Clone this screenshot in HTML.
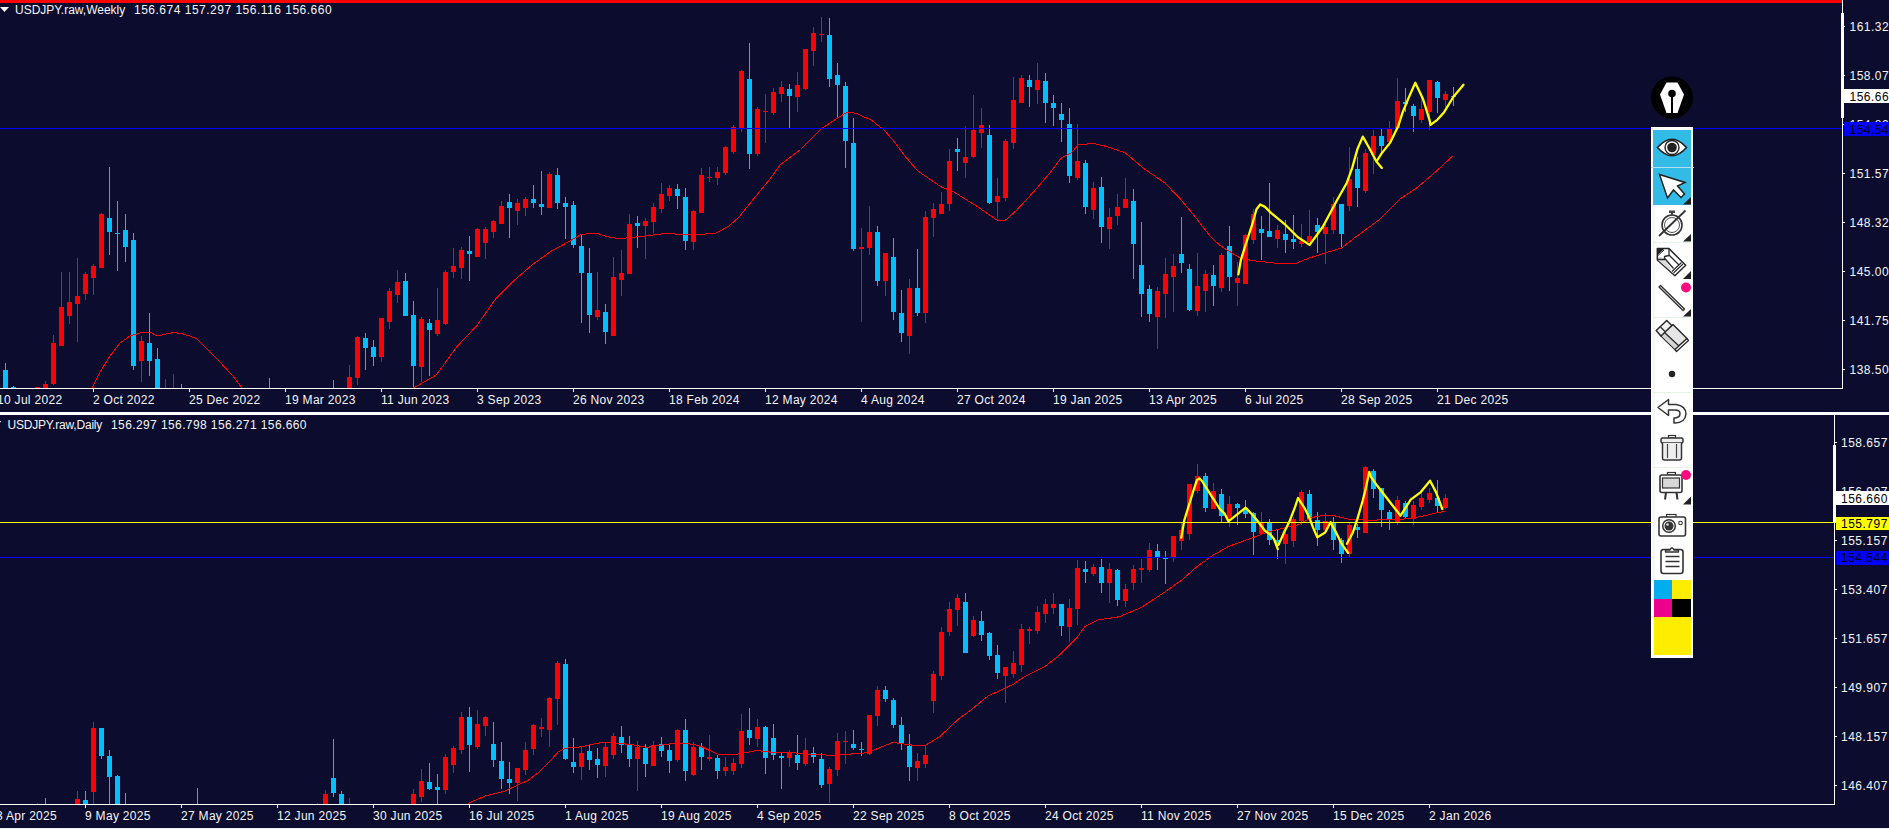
<!DOCTYPE html>
<html><head><meta charset="utf-8"><style>
html,body{margin:0;padding:0;width:1889px;height:829px;overflow:hidden;background:#0c0c2e;}
svg text{font-family:"Liberation Sans",sans-serif;}
</style></head><body>
<svg width="1889" height="829" viewBox="0 0 1889 829" style="position:absolute;left:0;top:0">
<defs><clipPath id="ct"><rect x="0" y="3" width="1842" height="385"/></clipPath><clipPath id="cb"><rect x="0" y="415" width="1834" height="389"/></clipPath></defs>
<rect x="0" y="0" width="1889" height="829" fill="#0c0c2e"/>
<g clip-path="url(#ct)" shape-rendering="crispEdges">
<rect x="5" y="363" width="1" height="25" fill="#00bfff"/>
<rect x="3" y="370" width="5" height="18" fill="#00bfff"/>
<rect x="13" y="386" width="1" height="2" fill="#00bfff"/>
<rect x="11" y="387" width="5" height="1" fill="#00bfff"/>
<rect x="37" y="387" width="1" height="1" fill="#ff0000"/>
<rect x="35" y="387" width="5" height="1" fill="#ff0000"/>
<rect x="45" y="381" width="1" height="7" fill="#ff0000"/>
<rect x="43" y="384" width="5" height="4" fill="#ff0000"/>
<rect x="53" y="335" width="1" height="50" fill="#ff0000"/>
<rect x="51" y="343" width="5" height="41" fill="#ff0000"/>
<rect x="61" y="272" width="1" height="74" fill="#ff0000"/>
<rect x="59" y="307" width="5" height="39" fill="#ff0000"/>
<rect x="69" y="272" width="1" height="52" fill="#ff0000"/>
<rect x="67" y="302" width="5" height="14" fill="#ff0000"/>
<rect x="77" y="258" width="1" height="84" fill="#ff0000"/>
<rect x="75" y="296" width="5" height="8" fill="#ff0000"/>
<rect x="85" y="272" width="1" height="28" fill="#ff0000"/>
<rect x="83" y="274" width="5" height="20" fill="#ff0000"/>
<rect x="93" y="264" width="1" height="31" fill="#ff0000"/>
<rect x="91" y="266" width="5" height="12" fill="#ff0000"/>
<rect x="101" y="213" width="1" height="55" fill="#ff0000"/>
<rect x="99" y="214" width="5" height="54" fill="#ff0000"/>
<rect x="109" y="167" width="1" height="88" fill="#00bfff"/>
<rect x="107" y="218" width="5" height="14" fill="#00bfff"/>
<rect x="117" y="201" width="1" height="70" fill="#00bfff"/>
<rect x="115" y="233" width="5" height="1" fill="#00bfff"/>
<rect x="125" y="214" width="1" height="48" fill="#00bfff"/>
<rect x="123" y="230" width="5" height="17" fill="#00bfff"/>
<rect x="133" y="233" width="1" height="137" fill="#00bfff"/>
<rect x="131" y="240" width="5" height="126" fill="#00bfff"/>
<rect x="141" y="336" width="1" height="46" fill="#ff0000"/>
<rect x="139" y="341" width="5" height="20" fill="#ff0000"/>
<rect x="149" y="313" width="1" height="63" fill="#00bfff"/>
<rect x="147" y="343" width="5" height="18" fill="#00bfff"/>
<rect x="157" y="348" width="1" height="40" fill="#00bfff"/>
<rect x="155" y="359" width="5" height="29" fill="#00bfff"/>
<rect x="165" y="379" width="1" height="9" fill="#ff0000"/>
<rect x="173" y="374" width="1" height="14" fill="#ff0000"/>
<rect x="181" y="384" width="1" height="4" fill="#00bfff"/>
<rect x="269" y="378" width="1" height="10" fill="#00bfff"/>
<rect x="333" y="380" width="1" height="8" fill="#00bfff"/>
<rect x="349" y="365" width="1" height="23" fill="#ff0000"/>
<rect x="347" y="377" width="5" height="11" fill="#ff0000"/>
<rect x="357" y="336" width="1" height="49" fill="#ff0000"/>
<rect x="355" y="337" width="5" height="41" fill="#ff0000"/>
<rect x="365" y="333" width="1" height="37" fill="#00bfff"/>
<rect x="363" y="338" width="5" height="10" fill="#00bfff"/>
<rect x="373" y="340" width="1" height="26" fill="#00bfff"/>
<rect x="371" y="347" width="5" height="10" fill="#00bfff"/>
<rect x="381" y="318" width="1" height="44" fill="#ff0000"/>
<rect x="379" y="318" width="5" height="39" fill="#ff0000"/>
<rect x="389" y="288" width="1" height="41" fill="#ff0000"/>
<rect x="387" y="291" width="5" height="31" fill="#ff0000"/>
<rect x="397" y="270" width="1" height="33" fill="#ff0000"/>
<rect x="395" y="282" width="5" height="13" fill="#ff0000"/>
<rect x="405" y="273" width="1" height="43" fill="#00bfff"/>
<rect x="403" y="281" width="5" height="35" fill="#00bfff"/>
<rect x="413" y="301" width="1" height="87" fill="#00bfff"/>
<rect x="411" y="315" width="5" height="51" fill="#00bfff"/>
<rect x="421" y="317" width="1" height="65" fill="#ff0000"/>
<rect x="419" y="319" width="5" height="48" fill="#ff0000"/>
<rect x="429" y="319" width="1" height="57" fill="#00bfff"/>
<rect x="427" y="323" width="5" height="7" fill="#00bfff"/>
<rect x="437" y="288" width="1" height="48" fill="#ff0000"/>
<rect x="435" y="320" width="5" height="14" fill="#ff0000"/>
<rect x="445" y="270" width="1" height="55" fill="#ff0000"/>
<rect x="443" y="272" width="5" height="52" fill="#ff0000"/>
<rect x="453" y="248" width="1" height="30" fill="#ff0000"/>
<rect x="451" y="266" width="5" height="6" fill="#ff0000"/>
<rect x="461" y="247" width="1" height="32" fill="#ff0000"/>
<rect x="459" y="250" width="5" height="18" fill="#ff0000"/>
<rect x="469" y="236" width="1" height="45" fill="#00bfff"/>
<rect x="467" y="251" width="5" height="3" fill="#00bfff"/>
<rect x="477" y="228" width="1" height="29" fill="#ff0000"/>
<rect x="475" y="229" width="5" height="28" fill="#ff0000"/>
<rect x="485" y="227" width="1" height="32" fill="#ff0000"/>
<rect x="483" y="229" width="5" height="14" fill="#ff0000"/>
<rect x="493" y="220" width="1" height="18" fill="#ff0000"/>
<rect x="491" y="221" width="5" height="11" fill="#ff0000"/>
<rect x="501" y="201" width="1" height="23" fill="#ff0000"/>
<rect x="499" y="206" width="5" height="18" fill="#ff0000"/>
<rect x="509" y="194" width="1" height="44" fill="#00bfff"/>
<rect x="507" y="202" width="5" height="6" fill="#00bfff"/>
<rect x="517" y="199" width="1" height="26" fill="#ff0000"/>
<rect x="515" y="203" width="5" height="8" fill="#ff0000"/>
<rect x="525" y="197" width="1" height="19" fill="#ff0000"/>
<rect x="523" y="199" width="5" height="9" fill="#ff0000"/>
<rect x="533" y="185" width="1" height="23" fill="#00bfff"/>
<rect x="531" y="199" width="5" height="4" fill="#00bfff"/>
<rect x="541" y="171" width="1" height="44" fill="#00bfff"/>
<rect x="539" y="204" width="5" height="3" fill="#00bfff"/>
<rect x="549" y="172" width="1" height="36" fill="#ff0000"/>
<rect x="547" y="174" width="5" height="34" fill="#ff0000"/>
<rect x="557" y="168" width="1" height="41" fill="#00bfff"/>
<rect x="555" y="175" width="5" height="28" fill="#00bfff"/>
<rect x="565" y="197" width="1" height="42" fill="#00bfff"/>
<rect x="563" y="203" width="5" height="4" fill="#00bfff"/>
<rect x="573" y="201" width="1" height="47" fill="#00bfff"/>
<rect x="571" y="205" width="5" height="40" fill="#00bfff"/>
<rect x="581" y="235" width="1" height="88" fill="#00bfff"/>
<rect x="579" y="246" width="5" height="27" fill="#00bfff"/>
<rect x="589" y="248" width="1" height="85" fill="#00bfff"/>
<rect x="587" y="273" width="5" height="42" fill="#00bfff"/>
<rect x="597" y="272" width="1" height="48" fill="#ff0000"/>
<rect x="595" y="310" width="5" height="7" fill="#ff0000"/>
<rect x="605" y="304" width="1" height="40" fill="#00bfff"/>
<rect x="603" y="312" width="5" height="20" fill="#00bfff"/>
<rect x="613" y="257" width="1" height="79" fill="#ff0000"/>
<rect x="611" y="277" width="5" height="59" fill="#ff0000"/>
<rect x="621" y="250" width="1" height="46" fill="#ff0000"/>
<rect x="619" y="273" width="5" height="7" fill="#ff0000"/>
<rect x="629" y="214" width="1" height="60" fill="#ff0000"/>
<rect x="627" y="224" width="5" height="50" fill="#ff0000"/>
<rect x="637" y="216" width="1" height="32" fill="#00bfff"/>
<rect x="635" y="223" width="5" height="3" fill="#00bfff"/>
<rect x="645" y="218" width="1" height="41" fill="#ff0000"/>
<rect x="643" y="221" width="5" height="5" fill="#ff0000"/>
<rect x="653" y="203" width="1" height="30" fill="#ff0000"/>
<rect x="651" y="207" width="5" height="15" fill="#ff0000"/>
<rect x="661" y="183" width="1" height="30" fill="#ff0000"/>
<rect x="659" y="194" width="5" height="15" fill="#ff0000"/>
<rect x="669" y="185" width="1" height="16" fill="#ff0000"/>
<rect x="667" y="188" width="5" height="8" fill="#ff0000"/>
<rect x="677" y="184" width="1" height="25" fill="#00bfff"/>
<rect x="675" y="189" width="5" height="7" fill="#00bfff"/>
<rect x="685" y="188" width="1" height="62" fill="#00bfff"/>
<rect x="683" y="197" width="5" height="44" fill="#00bfff"/>
<rect x="693" y="210" width="1" height="40" fill="#ff0000"/>
<rect x="691" y="211" width="5" height="31" fill="#ff0000"/>
<rect x="701" y="168" width="1" height="45" fill="#ff0000"/>
<rect x="699" y="175" width="5" height="38" fill="#ff0000"/>
<rect x="709" y="167" width="1" height="15" fill="#ff0000"/>
<rect x="707" y="177" width="5" height="1" fill="#ff0000"/>
<rect x="717" y="167" width="1" height="18" fill="#ff0000"/>
<rect x="715" y="172" width="5" height="6" fill="#ff0000"/>
<rect x="725" y="146" width="1" height="29" fill="#ff0000"/>
<rect x="723" y="147" width="5" height="26" fill="#ff0000"/>
<rect x="733" y="125" width="1" height="29" fill="#ff0000"/>
<rect x="731" y="127" width="5" height="25" fill="#ff0000"/>
<rect x="741" y="70" width="1" height="62" fill="#ff0000"/>
<rect x="739" y="71" width="5" height="57" fill="#ff0000"/>
<rect x="749" y="43" width="1" height="126" fill="#00bfff"/>
<rect x="747" y="79" width="5" height="75" fill="#00bfff"/>
<rect x="757" y="107" width="1" height="49" fill="#ff0000"/>
<rect x="755" y="109" width="5" height="45" fill="#ff0000"/>
<rect x="765" y="94" width="1" height="49" fill="#ff0000"/>
<rect x="763" y="111" width="5" height="1" fill="#ff0000"/>
<rect x="773" y="88" width="1" height="27" fill="#ff0000"/>
<rect x="771" y="92" width="5" height="21" fill="#ff0000"/>
<rect x="781" y="81" width="1" height="21" fill="#ff0000"/>
<rect x="779" y="87" width="5" height="7" fill="#ff0000"/>
<rect x="789" y="84" width="1" height="44" fill="#00bfff"/>
<rect x="787" y="89" width="5" height="7" fill="#00bfff"/>
<rect x="797" y="72" width="1" height="40" fill="#ff0000"/>
<rect x="795" y="85" width="5" height="12" fill="#ff0000"/>
<rect x="805" y="49" width="1" height="41" fill="#ff0000"/>
<rect x="803" y="49" width="5" height="40" fill="#ff0000"/>
<rect x="813" y="27" width="1" height="39" fill="#ff0000"/>
<rect x="811" y="33" width="5" height="18" fill="#ff0000"/>
<rect x="821" y="17" width="1" height="25" fill="#ff0000"/>
<rect x="819" y="34" width="5" height="1" fill="#ff0000"/>
<rect x="829" y="18" width="1" height="69" fill="#00bfff"/>
<rect x="827" y="35" width="5" height="44" fill="#00bfff"/>
<rect x="837" y="63" width="1" height="54" fill="#00bfff"/>
<rect x="835" y="75" width="5" height="10" fill="#00bfff"/>
<rect x="845" y="82" width="1" height="86" fill="#00bfff"/>
<rect x="843" y="86" width="5" height="55" fill="#00bfff"/>
<rect x="853" y="118" width="1" height="133" fill="#00bfff"/>
<rect x="851" y="143" width="5" height="106" fill="#00bfff"/>
<rect x="861" y="228" width="1" height="94" fill="#ff0000"/>
<rect x="859" y="247" width="5" height="2" fill="#ff0000"/>
<rect x="869" y="206" width="1" height="49" fill="#ff0000"/>
<rect x="867" y="232" width="5" height="16" fill="#ff0000"/>
<rect x="877" y="226" width="1" height="60" fill="#00bfff"/>
<rect x="875" y="232" width="5" height="49" fill="#00bfff"/>
<rect x="885" y="253" width="1" height="43" fill="#ff0000"/>
<rect x="883" y="253" width="5" height="28" fill="#ff0000"/>
<rect x="893" y="238" width="1" height="82" fill="#00bfff"/>
<rect x="891" y="257" width="5" height="55" fill="#00bfff"/>
<rect x="901" y="290" width="1" height="52" fill="#00bfff"/>
<rect x="899" y="313" width="5" height="20" fill="#00bfff"/>
<rect x="909" y="279" width="1" height="75" fill="#ff0000"/>
<rect x="907" y="288" width="5" height="48" fill="#ff0000"/>
<rect x="917" y="249" width="1" height="67" fill="#00bfff"/>
<rect x="915" y="288" width="5" height="25" fill="#00bfff"/>
<rect x="925" y="211" width="1" height="112" fill="#ff0000"/>
<rect x="923" y="217" width="5" height="96" fill="#ff0000"/>
<rect x="933" y="203" width="1" height="34" fill="#ff0000"/>
<rect x="931" y="209" width="5" height="9" fill="#ff0000"/>
<rect x="941" y="192" width="1" height="22" fill="#ff0000"/>
<rect x="939" y="204" width="5" height="10" fill="#ff0000"/>
<rect x="949" y="149" width="1" height="62" fill="#ff0000"/>
<rect x="947" y="161" width="5" height="43" fill="#ff0000"/>
<rect x="957" y="138" width="1" height="33" fill="#00bfff"/>
<rect x="955" y="149" width="5" height="3" fill="#00bfff"/>
<rect x="965" y="126" width="1" height="52" fill="#ff0000"/>
<rect x="963" y="157" width="5" height="6" fill="#ff0000"/>
<rect x="973" y="95" width="1" height="63" fill="#ff0000"/>
<rect x="971" y="130" width="5" height="27" fill="#ff0000"/>
<rect x="981" y="108" width="1" height="40" fill="#ff0000"/>
<rect x="979" y="125" width="5" height="8" fill="#ff0000"/>
<rect x="989" y="125" width="1" height="79" fill="#00bfff"/>
<rect x="987" y="135" width="5" height="68" fill="#00bfff"/>
<rect x="997" y="178" width="1" height="40" fill="#ff0000"/>
<rect x="995" y="196" width="5" height="6" fill="#ff0000"/>
<rect x="1005" y="139" width="1" height="62" fill="#ff0000"/>
<rect x="1003" y="141" width="5" height="57" fill="#ff0000"/>
<rect x="1013" y="77" width="1" height="72" fill="#ff0000"/>
<rect x="1011" y="100" width="5" height="43" fill="#ff0000"/>
<rect x="1021" y="75" width="1" height="28" fill="#ff0000"/>
<rect x="1019" y="78" width="5" height="25" fill="#ff0000"/>
<rect x="1029" y="75" width="1" height="32" fill="#00bfff"/>
<rect x="1027" y="80" width="5" height="7" fill="#00bfff"/>
<rect x="1037" y="63" width="1" height="41" fill="#ff0000"/>
<rect x="1035" y="80" width="5" height="10" fill="#ff0000"/>
<rect x="1045" y="73" width="1" height="50" fill="#00bfff"/>
<rect x="1043" y="81" width="5" height="22" fill="#00bfff"/>
<rect x="1053" y="95" width="1" height="31" fill="#00bfff"/>
<rect x="1051" y="103" width="5" height="5" fill="#00bfff"/>
<rect x="1061" y="103" width="1" height="39" fill="#00bfff"/>
<rect x="1059" y="114" width="5" height="6" fill="#00bfff"/>
<rect x="1069" y="108" width="1" height="75" fill="#00bfff"/>
<rect x="1067" y="124" width="5" height="52" fill="#00bfff"/>
<rect x="1077" y="124" width="1" height="56" fill="#ff0000"/>
<rect x="1075" y="161" width="5" height="17" fill="#ff0000"/>
<rect x="1085" y="160" width="1" height="54" fill="#00bfff"/>
<rect x="1083" y="163" width="5" height="44" fill="#00bfff"/>
<rect x="1093" y="182" width="1" height="37" fill="#ff0000"/>
<rect x="1091" y="188" width="5" height="22" fill="#ff0000"/>
<rect x="1101" y="177" width="1" height="66" fill="#00bfff"/>
<rect x="1099" y="187" width="5" height="40" fill="#00bfff"/>
<rect x="1109" y="208" width="1" height="41" fill="#ff0000"/>
<rect x="1107" y="217" width="5" height="12" fill="#ff0000"/>
<rect x="1117" y="194" width="1" height="31" fill="#ff0000"/>
<rect x="1115" y="207" width="5" height="9" fill="#ff0000"/>
<rect x="1125" y="178" width="1" height="30" fill="#ff0000"/>
<rect x="1123" y="199" width="5" height="9" fill="#ff0000"/>
<rect x="1133" y="189" width="1" height="90" fill="#00bfff"/>
<rect x="1131" y="201" width="5" height="43" fill="#00bfff"/>
<rect x="1141" y="222" width="1" height="95" fill="#00bfff"/>
<rect x="1139" y="265" width="5" height="29" fill="#00bfff"/>
<rect x="1149" y="285" width="1" height="37" fill="#00bfff"/>
<rect x="1147" y="289" width="5" height="25" fill="#00bfff"/>
<rect x="1157" y="287" width="1" height="62" fill="#ff0000"/>
<rect x="1155" y="291" width="5" height="26" fill="#ff0000"/>
<rect x="1165" y="258" width="1" height="60" fill="#ff0000"/>
<rect x="1163" y="274" width="5" height="20" fill="#ff0000"/>
<rect x="1173" y="254" width="1" height="58" fill="#ff0000"/>
<rect x="1171" y="266" width="5" height="11" fill="#ff0000"/>
<rect x="1181" y="217" width="1" height="56" fill="#00bfff"/>
<rect x="1179" y="254" width="5" height="9" fill="#00bfff"/>
<rect x="1189" y="264" width="1" height="47" fill="#00bfff"/>
<rect x="1187" y="269" width="5" height="41" fill="#00bfff"/>
<rect x="1197" y="253" width="1" height="63" fill="#ff0000"/>
<rect x="1195" y="286" width="5" height="25" fill="#ff0000"/>
<rect x="1205" y="270" width="1" height="42" fill="#ff0000"/>
<rect x="1203" y="274" width="5" height="17" fill="#ff0000"/>
<rect x="1213" y="265" width="1" height="41" fill="#00bfff"/>
<rect x="1211" y="275" width="5" height="11" fill="#00bfff"/>
<rect x="1221" y="253" width="1" height="39" fill="#ff0000"/>
<rect x="1219" y="255" width="5" height="33" fill="#ff0000"/>
<rect x="1229" y="226" width="1" height="65" fill="#00bfff"/>
<rect x="1227" y="246" width="5" height="31" fill="#00bfff"/>
<rect x="1237" y="262" width="1" height="44" fill="#ff0000"/>
<rect x="1235" y="278" width="5" height="5" fill="#ff0000"/>
<rect x="1245" y="234" width="1" height="50" fill="#ff0000"/>
<rect x="1243" y="235" width="5" height="49" fill="#ff0000"/>
<rect x="1253" y="209" width="1" height="35" fill="#ff0000"/>
<rect x="1251" y="214" width="5" height="26" fill="#ff0000"/>
<rect x="1261" y="216" width="1" height="44" fill="#00bfff"/>
<rect x="1259" y="229" width="5" height="4" fill="#00bfff"/>
<rect x="1269" y="183" width="1" height="54" fill="#00bfff"/>
<rect x="1267" y="231" width="5" height="6" fill="#00bfff"/>
<rect x="1277" y="225" width="1" height="23" fill="#ff0000"/>
<rect x="1275" y="230" width="5" height="9" fill="#ff0000"/>
<rect x="1285" y="220" width="1" height="33" fill="#00bfff"/>
<rect x="1283" y="234" width="5" height="6" fill="#00bfff"/>
<rect x="1293" y="215" width="1" height="34" fill="#00bfff"/>
<rect x="1291" y="239" width="5" height="3" fill="#00bfff"/>
<rect x="1301" y="224" width="1" height="23" fill="#ff0000"/>
<rect x="1299" y="241" width="5" height="3" fill="#ff0000"/>
<rect x="1309" y="210" width="1" height="32" fill="#ff0000"/>
<rect x="1307" y="236" width="5" height="6" fill="#ff0000"/>
<rect x="1317" y="218" width="1" height="35" fill="#00bfff"/>
<rect x="1315" y="225" width="5" height="7" fill="#00bfff"/>
<rect x="1325" y="224" width="1" height="40" fill="#ff0000"/>
<rect x="1323" y="227" width="5" height="7" fill="#ff0000"/>
<rect x="1333" y="197" width="1" height="37" fill="#ff0000"/>
<rect x="1331" y="204" width="5" height="26" fill="#ff0000"/>
<rect x="1341" y="204" width="1" height="44" fill="#00bfff"/>
<rect x="1339" y="204" width="5" height="30" fill="#00bfff"/>
<rect x="1349" y="147" width="1" height="64" fill="#ff0000"/>
<rect x="1347" y="179" width="5" height="27" fill="#ff0000"/>
<rect x="1357" y="157" width="1" height="50" fill="#00bfff"/>
<rect x="1355" y="169" width="5" height="19" fill="#00bfff"/>
<rect x="1365" y="149" width="1" height="44" fill="#ff0000"/>
<rect x="1363" y="153" width="5" height="38" fill="#ff0000"/>
<rect x="1373" y="130" width="1" height="44" fill="#ff0000"/>
<rect x="1371" y="136" width="5" height="19" fill="#ff0000"/>
<rect x="1381" y="128" width="1" height="26" fill="#00bfff"/>
<rect x="1379" y="136" width="5" height="10" fill="#00bfff"/>
<rect x="1389" y="121" width="1" height="25" fill="#ff0000"/>
<rect x="1387" y="129" width="5" height="13" fill="#ff0000"/>
<rect x="1397" y="78" width="1" height="50" fill="#ff0000"/>
<rect x="1395" y="101" width="5" height="27" fill="#ff0000"/>
<rect x="1405" y="88" width="1" height="24" fill="#00bfff"/>
<rect x="1403" y="102" width="5" height="2" fill="#00bfff"/>
<rect x="1413" y="104" width="1" height="28" fill="#00bfff"/>
<rect x="1411" y="106" width="5" height="10" fill="#00bfff"/>
<rect x="1421" y="93" width="1" height="30" fill="#ff0000"/>
<rect x="1419" y="109" width="5" height="11" fill="#ff0000"/>
<rect x="1429" y="80" width="1" height="50" fill="#ff0000"/>
<rect x="1427" y="80" width="5" height="32" fill="#ff0000"/>
<rect x="1437" y="81" width="1" height="32" fill="#00bfff"/>
<rect x="1435" y="82" width="5" height="16" fill="#00bfff"/>
<rect x="1445" y="91" width="1" height="16" fill="#ff0000"/>
<rect x="1443" y="94" width="5" height="6" fill="#ff0000"/>
<rect x="1453" y="87" width="1" height="19" fill="#00bfff"/>
<rect x="1451" y="96" width="5" height="1" fill="#00bfff"/>
<polyline points="92.0,388.0 100.0,372.0 110.0,356.0 120.0,343.0 130.0,336.0 140.0,333.0 150.0,332.0 157.0,336.0 165.0,334.3 173.0,332.5 181.0,333.5 190.0,336.0 197.0,339.0 210.0,352.0 218.0,360.0 225.0,367.5 233.0,376.0 242.0,388.0" fill="none" stroke="#ff0000" stroke-width="1" />
<polyline points="413.0,388.0 416.0,386.5 436.3,375.0 456.5,347.0 476.8,325.7 495.2,299.5 515.5,279.2 533.2,264.0 551.0,251.3 565.0,243.7 581.3,234.4 596.5,233.1 606.7,236.6 619.3,238.7 645.3,236.0 665.6,233.5 680.8,234.3 696.0,234.8 716.3,233.0 729.0,226.0 739.0,217.0 754.3,198.0 770.0,179.0 780.3,164.7 800.5,149.5 820.8,129.2 836.0,119.0 847.4,112.0 856.3,113.3 871.5,120.3 884.1,130.0 892.8,140.0 904.5,155.6 917.4,170.6 940.8,186.7 953.7,191.9 978.0,207.0 997.0,220.2 1005.4,220.2 1016.0,210.8 1033.7,191.8 1049.0,174.0 1061.6,157.6 1071.7,152.5 1078.0,145.0 1093.3,143.3 1106.5,146.5 1125.0,152.6 1143.7,168.5 1165.0,183.0 1180.8,199.5 1196.8,218.9 1210.0,236.2 1220.0,245.5 1240.3,258.2 1253.0,260.7 1283.3,264.0 1296.0,263.3 1308.7,258.2 1326.4,252.6 1341.6,248.0 1354.3,238.0 1370.0,226.5 1380.3,219.0 1400.5,198.8 1418.3,186.7 1436.0,171.5 1453.0,155.8" fill="none" stroke="#ff0000" stroke-width="1" />
<rect x="0" y="128" width="1842" height="1" fill="#0000ff"/>
</g>
<g clip-path="url(#ct)">
<polyline points="1238.4,274.4 1240.9,259.9 1245.7,244.3 1251.7,226.2 1256.5,209.3 1260.2,204.5 1265.0,206.9 1271.0,212.9 1284.3,223.8 1297.6,237.0 1309.6,244.9 1322.7,227.0 1337.4,199.5 1346.9,182.7 1352.2,167.9 1357.5,148.9 1362.8,136.6 1369.1,147.8 1376.5,161.6 1381.8,167.9" fill="none" stroke="#ffff00" stroke-width="2.3" stroke-linejoin="round" stroke-linecap="round"/>
<polyline points="1377.1,160.5 1381.8,153.1 1390.2,142.6 1398.4,125.7 1402.7,112.2 1408.6,97.9 1415.3,82.7 1422.9,98.7 1429.7,120.7 1430.5,124.9 1437.3,119.8 1444.1,112.2 1453.3,97.0 1463.5,84.8" fill="none" stroke="#ffff00" stroke-width="2.3" stroke-linejoin="round" stroke-linecap="round"/>
</g>
<rect x="0" y="0" width="1842" height="3" fill="#ff0000"/>
<g clip-path="url(#cb)" shape-rendering="crispEdges">
<rect x="37" y="803" width="1" height="1" fill="#ff0000"/>
<rect x="45" y="798" width="1" height="6" fill="#00bfff"/>
<rect x="77" y="791" width="1" height="13" fill="#ff0000"/>
<rect x="75" y="799" width="5" height="5" fill="#ff0000"/>
<rect x="85" y="791" width="1" height="13" fill="#00bfff"/>
<rect x="83" y="800" width="5" height="4" fill="#00bfff"/>
<rect x="93" y="722" width="1" height="82" fill="#ff0000"/>
<rect x="91" y="728" width="5" height="64" fill="#ff0000"/>
<rect x="101" y="728" width="1" height="31" fill="#00bfff"/>
<rect x="99" y="728" width="5" height="28" fill="#00bfff"/>
<rect x="109" y="750" width="1" height="54" fill="#00bfff"/>
<rect x="107" y="756" width="5" height="21" fill="#00bfff"/>
<rect x="117" y="775" width="1" height="29" fill="#00bfff"/>
<rect x="115" y="776" width="5" height="28" fill="#00bfff"/>
<rect x="125" y="793" width="1" height="11" fill="#00bfff"/>
<rect x="197" y="788" width="1" height="16" fill="#00bfff"/>
<rect x="317" y="803" width="1" height="1" fill="#ff0000"/>
<rect x="325" y="790" width="1" height="14" fill="#ff0000"/>
<rect x="323" y="794" width="5" height="10" fill="#ff0000"/>
<rect x="333" y="739" width="1" height="58" fill="#00bfff"/>
<rect x="331" y="778" width="5" height="15" fill="#00bfff"/>
<rect x="341" y="791" width="1" height="13" fill="#00bfff"/>
<rect x="339" y="794" width="5" height="10" fill="#00bfff"/>
<rect x="349" y="798" width="1" height="6" fill="#ff0000"/>
<rect x="413" y="789" width="1" height="15" fill="#ff0000"/>
<rect x="411" y="794" width="5" height="10" fill="#ff0000"/>
<rect x="421" y="769" width="1" height="33" fill="#ff0000"/>
<rect x="419" y="781" width="5" height="16" fill="#ff0000"/>
<rect x="429" y="763" width="1" height="27" fill="#00bfff"/>
<rect x="427" y="782" width="5" height="7" fill="#00bfff"/>
<rect x="437" y="774" width="1" height="30" fill="#00bfff"/>
<rect x="435" y="787" width="5" height="3" fill="#00bfff"/>
<rect x="445" y="754" width="1" height="40" fill="#ff0000"/>
<rect x="443" y="757" width="5" height="33" fill="#ff0000"/>
<rect x="453" y="746" width="1" height="27" fill="#ff0000"/>
<rect x="451" y="748" width="5" height="17" fill="#ff0000"/>
<rect x="461" y="712" width="1" height="42" fill="#ff0000"/>
<rect x="459" y="717" width="5" height="33" fill="#ff0000"/>
<rect x="469" y="707" width="1" height="65" fill="#00bfff"/>
<rect x="467" y="717" width="5" height="28" fill="#00bfff"/>
<rect x="477" y="710" width="1" height="39" fill="#ff0000"/>
<rect x="475" y="724" width="5" height="23" fill="#ff0000"/>
<rect x="485" y="716" width="1" height="20" fill="#ff0000"/>
<rect x="483" y="717" width="5" height="9" fill="#ff0000"/>
<rect x="493" y="722" width="1" height="45" fill="#00bfff"/>
<rect x="491" y="744" width="5" height="16" fill="#00bfff"/>
<rect x="501" y="742" width="1" height="47" fill="#00bfff"/>
<rect x="499" y="761" width="5" height="18" fill="#00bfff"/>
<rect x="509" y="762" width="1" height="32" fill="#00bfff"/>
<rect x="507" y="779" width="5" height="4" fill="#00bfff"/>
<rect x="517" y="768" width="1" height="33" fill="#ff0000"/>
<rect x="515" y="768" width="5" height="15" fill="#ff0000"/>
<rect x="525" y="742" width="1" height="33" fill="#ff0000"/>
<rect x="523" y="750" width="5" height="20" fill="#ff0000"/>
<rect x="533" y="724" width="1" height="31" fill="#ff0000"/>
<rect x="531" y="725" width="5" height="24" fill="#ff0000"/>
<rect x="541" y="718" width="1" height="19" fill="#ff0000"/>
<rect x="539" y="727" width="5" height="2" fill="#ff0000"/>
<rect x="549" y="697" width="1" height="50" fill="#ff0000"/>
<rect x="547" y="698" width="5" height="32" fill="#ff0000"/>
<rect x="557" y="661" width="1" height="64" fill="#ff0000"/>
<rect x="555" y="663" width="5" height="36" fill="#ff0000"/>
<rect x="565" y="659" width="1" height="101" fill="#00bfff"/>
<rect x="563" y="664" width="5" height="95" fill="#00bfff"/>
<rect x="573" y="738" width="1" height="35" fill="#00bfff"/>
<rect x="571" y="762" width="5" height="5" fill="#00bfff"/>
<rect x="581" y="746" width="1" height="34" fill="#ff0000"/>
<rect x="579" y="753" width="5" height="14" fill="#ff0000"/>
<rect x="589" y="745" width="1" height="25" fill="#00bfff"/>
<rect x="587" y="751" width="5" height="9" fill="#00bfff"/>
<rect x="597" y="748" width="1" height="30" fill="#00bfff"/>
<rect x="595" y="759" width="5" height="6" fill="#00bfff"/>
<rect x="605" y="743" width="1" height="34" fill="#ff0000"/>
<rect x="603" y="747" width="5" height="19" fill="#ff0000"/>
<rect x="613" y="733" width="1" height="26" fill="#ff0000"/>
<rect x="611" y="736" width="5" height="19" fill="#ff0000"/>
<rect x="621" y="726" width="1" height="27" fill="#00bfff"/>
<rect x="619" y="737" width="5" height="8" fill="#00bfff"/>
<rect x="629" y="736" width="1" height="31" fill="#00bfff"/>
<rect x="627" y="745" width="5" height="14" fill="#00bfff"/>
<rect x="637" y="741" width="1" height="50" fill="#ff0000"/>
<rect x="635" y="747" width="5" height="12" fill="#ff0000"/>
<rect x="645" y="744" width="1" height="33" fill="#00bfff"/>
<rect x="643" y="748" width="5" height="16" fill="#00bfff"/>
<rect x="653" y="741" width="1" height="25" fill="#ff0000"/>
<rect x="651" y="745" width="5" height="21" fill="#ff0000"/>
<rect x="661" y="737" width="1" height="20" fill="#00bfff"/>
<rect x="659" y="744" width="5" height="7" fill="#00bfff"/>
<rect x="669" y="745" width="1" height="28" fill="#00bfff"/>
<rect x="667" y="750" width="5" height="11" fill="#00bfff"/>
<rect x="677" y="729" width="1" height="33" fill="#ff0000"/>
<rect x="675" y="730" width="5" height="30" fill="#ff0000"/>
<rect x="685" y="719" width="1" height="62" fill="#00bfff"/>
<rect x="683" y="730" width="5" height="41" fill="#00bfff"/>
<rect x="693" y="742" width="1" height="34" fill="#ff0000"/>
<rect x="691" y="747" width="5" height="28" fill="#ff0000"/>
<rect x="701" y="743" width="1" height="27" fill="#00bfff"/>
<rect x="699" y="747" width="5" height="10" fill="#00bfff"/>
<rect x="709" y="735" width="1" height="26" fill="#ff0000"/>
<rect x="707" y="757" width="5" height="2" fill="#ff0000"/>
<rect x="717" y="755" width="1" height="24" fill="#00bfff"/>
<rect x="715" y="758" width="5" height="13" fill="#00bfff"/>
<rect x="725" y="757" width="1" height="19" fill="#ff0000"/>
<rect x="723" y="767" width="5" height="4" fill="#ff0000"/>
<rect x="733" y="758" width="1" height="17" fill="#ff0000"/>
<rect x="731" y="763" width="5" height="8" fill="#ff0000"/>
<rect x="741" y="714" width="1" height="54" fill="#ff0000"/>
<rect x="739" y="731" width="5" height="33" fill="#ff0000"/>
<rect x="749" y="708" width="1" height="37" fill="#00bfff"/>
<rect x="747" y="730" width="5" height="8" fill="#00bfff"/>
<rect x="757" y="719" width="1" height="28" fill="#ff0000"/>
<rect x="755" y="727" width="5" height="12" fill="#ff0000"/>
<rect x="765" y="726" width="1" height="48" fill="#00bfff"/>
<rect x="763" y="727" width="5" height="31" fill="#00bfff"/>
<rect x="773" y="724" width="1" height="36" fill="#00bfff"/>
<rect x="771" y="738" width="5" height="17" fill="#00bfff"/>
<rect x="781" y="753" width="1" height="36" fill="#00bfff"/>
<rect x="779" y="756" width="5" height="2" fill="#00bfff"/>
<rect x="789" y="750" width="1" height="17" fill="#ff0000"/>
<rect x="787" y="752" width="5" height="6" fill="#ff0000"/>
<rect x="797" y="735" width="1" height="35" fill="#00bfff"/>
<rect x="795" y="755" width="5" height="8" fill="#00bfff"/>
<rect x="805" y="738" width="1" height="28" fill="#ff0000"/>
<rect x="803" y="750" width="5" height="14" fill="#ff0000"/>
<rect x="813" y="747" width="1" height="16" fill="#00bfff"/>
<rect x="811" y="753" width="5" height="4" fill="#00bfff"/>
<rect x="821" y="753" width="1" height="35" fill="#00bfff"/>
<rect x="819" y="759" width="5" height="26" fill="#00bfff"/>
<rect x="829" y="767" width="1" height="36" fill="#ff0000"/>
<rect x="827" y="769" width="5" height="15" fill="#ff0000"/>
<rect x="837" y="733" width="1" height="43" fill="#ff0000"/>
<rect x="835" y="741" width="5" height="29" fill="#ff0000"/>
<rect x="845" y="731" width="1" height="33" fill="#ff0000"/>
<rect x="843" y="741" width="5" height="1" fill="#ff0000"/>
<rect x="853" y="730" width="1" height="20" fill="#00bfff"/>
<rect x="851" y="744" width="5" height="4" fill="#00bfff"/>
<rect x="861" y="742" width="1" height="14" fill="#00bfff"/>
<rect x="859" y="749" width="5" height="1" fill="#00bfff"/>
<rect x="869" y="715" width="1" height="40" fill="#ff0000"/>
<rect x="867" y="715" width="5" height="39" fill="#ff0000"/>
<rect x="877" y="686" width="1" height="40" fill="#ff0000"/>
<rect x="875" y="690" width="5" height="26" fill="#ff0000"/>
<rect x="885" y="686" width="1" height="16" fill="#00bfff"/>
<rect x="883" y="690" width="5" height="9" fill="#00bfff"/>
<rect x="893" y="698" width="1" height="30" fill="#00bfff"/>
<rect x="891" y="700" width="5" height="25" fill="#00bfff"/>
<rect x="901" y="717" width="1" height="33" fill="#00bfff"/>
<rect x="899" y="725" width="5" height="18" fill="#00bfff"/>
<rect x="909" y="734" width="1" height="47" fill="#00bfff"/>
<rect x="907" y="746" width="5" height="21" fill="#00bfff"/>
<rect x="917" y="753" width="1" height="28" fill="#ff0000"/>
<rect x="915" y="761" width="5" height="7" fill="#ff0000"/>
<rect x="925" y="745" width="1" height="23" fill="#ff0000"/>
<rect x="923" y="755" width="5" height="9" fill="#ff0000"/>
<rect x="933" y="671" width="1" height="42" fill="#ff0000"/>
<rect x="931" y="674" width="5" height="27" fill="#ff0000"/>
<rect x="941" y="627" width="1" height="53" fill="#ff0000"/>
<rect x="939" y="632" width="5" height="44" fill="#ff0000"/>
<rect x="949" y="602" width="1" height="34" fill="#ff0000"/>
<rect x="947" y="609" width="5" height="23" fill="#ff0000"/>
<rect x="957" y="594" width="1" height="32" fill="#ff0000"/>
<rect x="955" y="598" width="5" height="12" fill="#ff0000"/>
<rect x="965" y="593" width="1" height="60" fill="#00bfff"/>
<rect x="963" y="602" width="5" height="51" fill="#00bfff"/>
<rect x="973" y="616" width="1" height="21" fill="#ff0000"/>
<rect x="971" y="620" width="5" height="16" fill="#ff0000"/>
<rect x="981" y="611" width="1" height="30" fill="#00bfff"/>
<rect x="979" y="621" width="5" height="14" fill="#00bfff"/>
<rect x="989" y="632" width="1" height="28" fill="#00bfff"/>
<rect x="987" y="633" width="5" height="23" fill="#00bfff"/>
<rect x="997" y="645" width="1" height="34" fill="#00bfff"/>
<rect x="995" y="655" width="5" height="18" fill="#00bfff"/>
<rect x="1005" y="667" width="1" height="36" fill="#ff0000"/>
<rect x="1003" y="667" width="5" height="9" fill="#ff0000"/>
<rect x="1013" y="651" width="1" height="27" fill="#ff0000"/>
<rect x="1011" y="663" width="5" height="11" fill="#ff0000"/>
<rect x="1021" y="624" width="1" height="48" fill="#ff0000"/>
<rect x="1019" y="629" width="5" height="36" fill="#ff0000"/>
<rect x="1029" y="627" width="1" height="17" fill="#ff0000"/>
<rect x="1027" y="629" width="5" height="2" fill="#ff0000"/>
<rect x="1037" y="606" width="1" height="28" fill="#ff0000"/>
<rect x="1035" y="612" width="5" height="19" fill="#ff0000"/>
<rect x="1045" y="599" width="1" height="24" fill="#ff0000"/>
<rect x="1043" y="604" width="5" height="10" fill="#ff0000"/>
<rect x="1053" y="593" width="1" height="21" fill="#ff0000"/>
<rect x="1051" y="604" width="5" height="4" fill="#ff0000"/>
<rect x="1061" y="604" width="1" height="32" fill="#00bfff"/>
<rect x="1059" y="604" width="5" height="22" fill="#00bfff"/>
<rect x="1069" y="599" width="1" height="43" fill="#ff0000"/>
<rect x="1067" y="608" width="5" height="19" fill="#ff0000"/>
<rect x="1077" y="560" width="1" height="65" fill="#ff0000"/>
<rect x="1075" y="568" width="5" height="41" fill="#ff0000"/>
<rect x="1085" y="561" width="1" height="22" fill="#00bfff"/>
<rect x="1083" y="569" width="5" height="3" fill="#00bfff"/>
<rect x="1093" y="564" width="1" height="12" fill="#ff0000"/>
<rect x="1091" y="567" width="5" height="7" fill="#ff0000"/>
<rect x="1101" y="559" width="1" height="34" fill="#00bfff"/>
<rect x="1099" y="567" width="5" height="16" fill="#00bfff"/>
<rect x="1109" y="563" width="1" height="40" fill="#ff0000"/>
<rect x="1107" y="569" width="5" height="14" fill="#ff0000"/>
<rect x="1117" y="569" width="1" height="37" fill="#00bfff"/>
<rect x="1115" y="570" width="5" height="30" fill="#00bfff"/>
<rect x="1125" y="584" width="1" height="23" fill="#ff0000"/>
<rect x="1123" y="589" width="5" height="12" fill="#ff0000"/>
<rect x="1133" y="565" width="1" height="25" fill="#ff0000"/>
<rect x="1131" y="569" width="5" height="14" fill="#ff0000"/>
<rect x="1141" y="559" width="1" height="24" fill="#ff0000"/>
<rect x="1139" y="568" width="5" height="2" fill="#ff0000"/>
<rect x="1149" y="543" width="1" height="29" fill="#ff0000"/>
<rect x="1147" y="550" width="5" height="20" fill="#ff0000"/>
<rect x="1157" y="544" width="1" height="26" fill="#00bfff"/>
<rect x="1155" y="551" width="5" height="7" fill="#00bfff"/>
<rect x="1165" y="551" width="1" height="33" fill="#00bfff"/>
<rect x="1163" y="557" width="5" height="2" fill="#00bfff"/>
<rect x="1173" y="536" width="1" height="26" fill="#ff0000"/>
<rect x="1171" y="536" width="5" height="22" fill="#ff0000"/>
<rect x="1181" y="523" width="1" height="27" fill="#ff0000"/>
<rect x="1179" y="530" width="5" height="11" fill="#ff0000"/>
<rect x="1189" y="484" width="1" height="56" fill="#ff0000"/>
<rect x="1187" y="484" width="5" height="50" fill="#ff0000"/>
<rect x="1197" y="464" width="1" height="29" fill="#ff0000"/>
<rect x="1195" y="476" width="5" height="15" fill="#ff0000"/>
<rect x="1205" y="473" width="1" height="39" fill="#00bfff"/>
<rect x="1203" y="476" width="5" height="32" fill="#00bfff"/>
<rect x="1213" y="483" width="1" height="26" fill="#ff0000"/>
<rect x="1211" y="491" width="5" height="18" fill="#ff0000"/>
<rect x="1221" y="489" width="1" height="33" fill="#00bfff"/>
<rect x="1219" y="494" width="5" height="22" fill="#00bfff"/>
<rect x="1229" y="496" width="1" height="31" fill="#ff0000"/>
<rect x="1227" y="504" width="5" height="14" fill="#ff0000"/>
<rect x="1237" y="503" width="1" height="22" fill="#00bfff"/>
<rect x="1235" y="504" width="5" height="4" fill="#00bfff"/>
<rect x="1245" y="500" width="1" height="18" fill="#00bfff"/>
<rect x="1243" y="508" width="5" height="6" fill="#00bfff"/>
<rect x="1253" y="512" width="1" height="43" fill="#00bfff"/>
<rect x="1251" y="513" width="5" height="19" fill="#00bfff"/>
<rect x="1261" y="512" width="1" height="22" fill="#ff0000"/>
<rect x="1259" y="522" width="5" height="12" fill="#ff0000"/>
<rect x="1269" y="519" width="1" height="26" fill="#00bfff"/>
<rect x="1267" y="523" width="5" height="17" fill="#00bfff"/>
<rect x="1277" y="530" width="1" height="29" fill="#00bfff"/>
<rect x="1275" y="540" width="5" height="4" fill="#00bfff"/>
<rect x="1285" y="528" width="1" height="36" fill="#ff0000"/>
<rect x="1283" y="534" width="5" height="10" fill="#ff0000"/>
<rect x="1293" y="517" width="1" height="30" fill="#ff0000"/>
<rect x="1291" y="519" width="5" height="22" fill="#ff0000"/>
<rect x="1301" y="490" width="1" height="35" fill="#ff0000"/>
<rect x="1299" y="492" width="5" height="29" fill="#ff0000"/>
<rect x="1309" y="490" width="1" height="29" fill="#00bfff"/>
<rect x="1307" y="494" width="5" height="25" fill="#00bfff"/>
<rect x="1317" y="512" width="1" height="34" fill="#00bfff"/>
<rect x="1315" y="520" width="5" height="10" fill="#00bfff"/>
<rect x="1325" y="513" width="1" height="17" fill="#ff0000"/>
<rect x="1323" y="521" width="5" height="9" fill="#ff0000"/>
<rect x="1333" y="517" width="1" height="33" fill="#00bfff"/>
<rect x="1331" y="522" width="5" height="18" fill="#00bfff"/>
<rect x="1341" y="538" width="1" height="25" fill="#00bfff"/>
<rect x="1339" y="540" width="5" height="14" fill="#00bfff"/>
<rect x="1349" y="523" width="1" height="35" fill="#ff0000"/>
<rect x="1347" y="525" width="5" height="29" fill="#ff0000"/>
<rect x="1357" y="524" width="1" height="14" fill="#00bfff"/>
<rect x="1355" y="527" width="5" height="3" fill="#00bfff"/>
<rect x="1365" y="466" width="1" height="67" fill="#ff0000"/>
<rect x="1363" y="467" width="5" height="66" fill="#ff0000"/>
<rect x="1373" y="469" width="1" height="29" fill="#00bfff"/>
<rect x="1371" y="471" width="5" height="18" fill="#00bfff"/>
<rect x="1381" y="488" width="1" height="39" fill="#00bfff"/>
<rect x="1379" y="488" width="5" height="22" fill="#00bfff"/>
<rect x="1389" y="510" width="1" height="20" fill="#00bfff"/>
<rect x="1387" y="512" width="5" height="8" fill="#00bfff"/>
<rect x="1397" y="496" width="1" height="29" fill="#ff0000"/>
<rect x="1395" y="500" width="5" height="22" fill="#ff0000"/>
<rect x="1405" y="501" width="1" height="18" fill="#00bfff"/>
<rect x="1403" y="503" width="5" height="14" fill="#00bfff"/>
<rect x="1413" y="501" width="1" height="24" fill="#ff0000"/>
<rect x="1411" y="505" width="5" height="14" fill="#ff0000"/>
<rect x="1421" y="490" width="1" height="20" fill="#ff0000"/>
<rect x="1419" y="498" width="5" height="9" fill="#ff0000"/>
<rect x="1429" y="488" width="1" height="15" fill="#ff0000"/>
<rect x="1427" y="493" width="5" height="7" fill="#ff0000"/>
<rect x="1437" y="480" width="1" height="33" fill="#00bfff"/>
<rect x="1435" y="498" width="5" height="8" fill="#00bfff"/>
<rect x="1445" y="494" width="1" height="15" fill="#ff0000"/>
<rect x="1443" y="498" width="5" height="10" fill="#ff0000"/>
<polyline points="467.7,803.4 485.8,795.8 504.8,791.0 518.2,785.0 527.7,780.5 539.1,772.0 552.5,758.3 558.2,752.0 565.8,748.2 581.0,746.8 601.4,742.4 618.5,743.4 632.7,744.8 647.0,747.4 672.6,743.4 692.5,744.1 702.5,747.0 716.7,754.0 736.6,754.3 756.5,750.5 770.8,752.2 790.0,752.2 807.5,754.6 835.0,755.2 868.0,752.7 876.3,749.1 892.8,742.3 901.0,743.6 917.5,745.8 925.8,745.0 939.5,736.8 958.4,719.2 971.1,709.7 988.0,696.0 1013.3,684.3 1023.9,677.0 1045.0,666.4 1059.8,654.8 1076.7,637.9 1085.1,626.3 1097.8,620.0 1118.9,616.8 1140.5,607.9 1161.0,594.6 1181.5,580.2 1197.9,565.9 1212.3,555.6 1228.7,546.4 1251.3,538.2 1267.7,532.0 1284.0,528.0 1300.0,524.2 1310.5,517.7 1324.9,515.2 1335.1,516.0 1351.5,519.7 1372.0,520.1 1392.5,519.7 1409.0,518.7 1423.3,516.0 1444.8,511.1" fill="none" stroke="#ff0000" stroke-width="1" />
<rect x="0" y="522" width="1834" height="1" fill="#ffff00"/>
<rect x="0" y="557" width="1834" height="1" fill="#0000ff"/>
</g>
<g clip-path="url(#cb)">
<polyline points="1181.3,537.6 1184.2,520.7 1192.7,492.8 1196.9,480.1 1199.4,478.4 1202.0,481.0 1207.9,490.3 1213.8,499.6 1219.7,508.9 1224.8,513.9 1228.4,521.3 1236.0,515.3 1245.7,507.7 1252.9,515.3 1258.8,522.5 1264.7,530.5 1270.6,534.8 1274.0,539.0 1277.8,549.1" fill="none" stroke="#ffff00" stroke-width="2.3" stroke-linejoin="round" stroke-linecap="round"/>
<polyline points="1278.6,544.9 1284.1,532.2 1289.2,522.1 1295.1,506.9 1298.0,498.0 1304.7,508.3 1309.5,517.9 1313.1,527.6 1317.3,537.2 1325.2,532.4 1330.6,522.1 1336.0,532.4 1342.0,544.4 1348.1,552.9" fill="none" stroke="#ffff00" stroke-width="2.3" stroke-linejoin="round" stroke-linecap="round"/>
<polyline points="1346.9,543.8 1352.9,532.4 1357.7,517.9 1362.6,501.0 1365.1,491.3 1369.3,471.8 1371.0,476.9 1376.9,485.3 1388.7,500.5 1400.5,515.7 1410.7,499.7 1420.8,492.1 1430.1,480.7 1436.0,492.1 1442.3,509.0" fill="none" stroke="#ffff00" stroke-width="2.3" stroke-linejoin="round" stroke-linecap="round"/>
</g>
<g shape-rendering="crispEdges" fill="#ffffff">
<rect x="1842" y="0" width="1" height="389"/>
<rect x="0" y="388" width="1843" height="1"/>
<rect x="1841" y="13" width="3" height="105"/>
<rect x="1843" y="26" width="2" height="1"/>
<rect x="1843" y="75" width="2" height="1"/>
<rect x="1843" y="124" width="2" height="1"/>
<rect x="1843" y="173" width="2" height="1"/>
<rect x="1843" y="222" width="2" height="1"/>
<rect x="1843" y="271" width="2" height="1"/>
<rect x="1843" y="320" width="2" height="1"/>
<rect x="1843" y="369" width="2" height="1"/>
<rect x="-3" y="389" width="1" height="3"/>
<rect x="93" y="389" width="1" height="3"/>
<rect x="189" y="389" width="1" height="3"/>
<rect x="285" y="389" width="1" height="3"/>
<rect x="381" y="389" width="1" height="3"/>
<rect x="477" y="389" width="1" height="3"/>
<rect x="573" y="389" width="1" height="3"/>
<rect x="669" y="389" width="1" height="3"/>
<rect x="765" y="389" width="1" height="3"/>
<rect x="861" y="389" width="1" height="3"/>
<rect x="957" y="389" width="1" height="3"/>
<rect x="1053" y="389" width="1" height="3"/>
<rect x="1149" y="389" width="1" height="3"/>
<rect x="1245" y="389" width="1" height="3"/>
<rect x="1341" y="389" width="1" height="3"/>
<rect x="1437" y="389" width="1" height="3"/>
<rect x="0" y="412" width="1889" height="3"/>
<rect x="1834" y="415" width="1" height="390"/>
<rect x="0" y="804" width="1835" height="1"/>
<rect x="1833" y="445" width="3" height="78"/>
<rect x="1835" y="442" width="2" height="1"/>
<rect x="1835" y="491" width="2" height="1"/>
<rect x="1835" y="540" width="2" height="1"/>
<rect x="1835" y="589" width="2" height="1"/>
<rect x="1835" y="638" width="2" height="1"/>
<rect x="1835" y="687" width="2" height="1"/>
<rect x="1835" y="736" width="2" height="1"/>
<rect x="1835" y="785" width="2" height="1"/>
<rect x="-11" y="805" width="1" height="3"/>
<rect x="85" y="805" width="1" height="3"/>
<rect x="181" y="805" width="1" height="3"/>
<rect x="277" y="805" width="1" height="3"/>
<rect x="373" y="805" width="1" height="3"/>
<rect x="469" y="805" width="1" height="3"/>
<rect x="565" y="805" width="1" height="3"/>
<rect x="661" y="805" width="1" height="3"/>
<rect x="757" y="805" width="1" height="3"/>
<rect x="853" y="805" width="1" height="3"/>
<rect x="949" y="805" width="1" height="3"/>
<rect x="1045" y="805" width="1" height="3"/>
<rect x="1141" y="805" width="1" height="3"/>
<rect x="1237" y="805" width="1" height="3"/>
<rect x="1333" y="805" width="1" height="3"/>
<rect x="1429" y="805" width="1" height="3"/>
<rect x="0" y="828" width="1889" height="1" fill="#f0f0f0"/>
</g>
<g font-family="Liberation Sans, sans-serif" font-size="12" fill="#f4f4f4">
<text x="1849.5" y="30.5" letter-spacing="0.5">161.325</text>
<text x="1849.5" y="79.5" letter-spacing="0.5">158.075</text>
<text x="1849.5" y="128.5" letter-spacing="0.5">154.825</text>
<text x="1849.5" y="177.5" letter-spacing="0.5">151.575</text>
<text x="1849.5" y="226.5" letter-spacing="0.5">148.325</text>
<text x="1849.5" y="275.5" letter-spacing="0.5">145.008</text>
<text x="1849.5" y="324.5" letter-spacing="0.5">141.758</text>
<text x="1849.5" y="373.5" letter-spacing="0.5">138.508</text>
<text x="1841" y="446.5" letter-spacing="0.5">158.657</text>
<text x="1841" y="495.5" letter-spacing="0.5">156.907</text>
<text x="1841" y="544.5" letter-spacing="0.5">155.157</text>
<text x="1841" y="593.5" letter-spacing="0.5">153.407</text>
<text x="1841" y="642.5" letter-spacing="0.5">151.657</text>
<text x="1841" y="691.5" letter-spacing="0.5">149.907</text>
<text x="1841" y="740.5" letter-spacing="0.5">148.157</text>
<text x="1841" y="789.5" letter-spacing="0.5">146.407</text>
<text x="-3" y="403.5" letter-spacing="0.3">10 Jul 2022</text>
<text x="93" y="403.5" letter-spacing="0.3">2 Oct 2022</text>
<text x="189" y="403.5" letter-spacing="0.3">25 Dec 2022</text>
<text x="285" y="403.5" letter-spacing="0.3">19 Mar 2023</text>
<text x="381" y="403.5" letter-spacing="0.3">11 Jun 2023</text>
<text x="477" y="403.5" letter-spacing="0.3">3 Sep 2023</text>
<text x="573" y="403.5" letter-spacing="0.3">26 Nov 2023</text>
<text x="669" y="403.5" letter-spacing="0.3">18 Feb 2024</text>
<text x="765" y="403.5" letter-spacing="0.3">12 May 2024</text>
<text x="861" y="403.5" letter-spacing="0.3">4 Aug 2024</text>
<text x="957" y="403.5" letter-spacing="0.3">27 Oct 2024</text>
<text x="1053" y="403.5" letter-spacing="0.3">19 Jan 2025</text>
<text x="1149" y="403.5" letter-spacing="0.3">13 Apr 2025</text>
<text x="1245" y="403.5" letter-spacing="0.3">6 Jul 2025</text>
<text x="1341" y="403.5" letter-spacing="0.3">28 Sep 2025</text>
<text x="1437" y="403.5" letter-spacing="0.3">21 Dec 2025</text>
<text x="-11" y="819.5" letter-spacing="0.3">23 Apr 2025</text>
<text x="85" y="819.5" letter-spacing="0.3">9 May 2025</text>
<text x="181" y="819.5" letter-spacing="0.3">27 May 2025</text>
<text x="277" y="819.5" letter-spacing="0.3">12 Jun 2025</text>
<text x="373" y="819.5" letter-spacing="0.3">30 Jun 2025</text>
<text x="469" y="819.5" letter-spacing="0.3">16 Jul 2025</text>
<text x="565" y="819.5" letter-spacing="0.3">1 Aug 2025</text>
<text x="661" y="819.5" letter-spacing="0.3">19 Aug 2025</text>
<text x="757" y="819.5" letter-spacing="0.3">4 Sep 2025</text>
<text x="853" y="819.5" letter-spacing="0.3">22 Sep 2025</text>
<text x="949" y="819.5" letter-spacing="0.3">8 Oct 2025</text>
<text x="1045" y="819.5" letter-spacing="0.3">24 Oct 2025</text>
<text x="1141" y="819.5" letter-spacing="0.3">11 Nov 2025</text>
<text x="1237" y="819.5" letter-spacing="0.3">27 Nov 2025</text>
<text x="1333" y="819.5" letter-spacing="0.3">15 Dec 2025</text>
<text x="1429" y="819.5" letter-spacing="0.3">2 Jan 2026</text>
<text x="15" y="14">USDJPY.raw,Weekly</text><text x="134" y="14" letter-spacing="0.5">156.674 157.297 156.116 156.660</text>
<text x="7.5" y="429" letter-spacing="-0.2">USDJPY.raw,Daily</text><text x="111" y="429" letter-spacing="0.4">156.297 156.798 156.271 156.660</text>
</g>
<path d="M0,7 L9,7 L4.5,12 Z" fill="#ffffff"/>
<path d="M-8,421 L1.5,421 L-3.25,426 Z" fill="#ffffff"/>
<g shape-rendering="crispEdges">
<rect x="1844" y="89" width="45" height="14" fill="#ffffff"/>
<rect x="1844" y="122" width="45" height="14" fill="#0000ff"/>
<rect x="1836" y="491" width="53" height="14" fill="#ffffff"/>
<rect x="1836" y="517" width="53" height="13" fill="#ffff00"/>
<rect x="1836" y="551" width="53" height="14" fill="#0000ff"/>
</g>
<g font-family="Liberation Sans, sans-serif" font-size="12" fill="#000000">
<text x="1849.5" y="100.5" letter-spacing="0.5">156.660</text>
<text x="1849.5" y="133.5" letter-spacing="0.5">154.544</text>
<text x="1841" y="502.5" letter-spacing="0.5">156.660</text>
<text x="1841" y="528" letter-spacing="0.5">155.797</text>
<text x="1841" y="562" letter-spacing="0.5">154.544</text>
</g>
<g id="toolbar">
<circle cx="1672" cy="97.5" r="21" fill="#000000"/>
<path d="M1666.5,82.5 L1677.5,82.5 L1684,94.5 L1677.5,113 L1666.5,113 L1660,94.5 Z" fill="#ffffff"/>
<circle cx="1672" cy="93.5" r="3.8" fill="#000000"/>
<rect x="1671" y="95" width="2" height="18" fill="#000000"/>
<rect x="1651" y="127" width="42" height="531" fill="#ffffff"/>
<rect x="1653.5" y="205" width="0.8" height="375" fill="#e4ece6"/>
<rect x="1653" y="130" width="38" height="75" fill="#33bbe8"/>
<rect x="1651" y="167" width="43" height="1" fill="#b9dcea"/>
<g fill="#f2fff2">
<rect x="1653" y="242" width="38" height="0.8" fill="#dff0df"/>
<rect x="1653" y="317" width="38" height="0.8" fill="#dff0df"/>
<rect x="1653" y="392" width="38" height="0.8" fill="#dff0df"/>
<rect x="1653" y="467" width="38" height="0.8" fill="#dff0df"/>
</g>
<!-- eye -->
<path d="M1657.5,147.5 Q1672,131 1686.5,147.5 Q1672,164 1657.5,147.5 Z" fill="#ffffff" stroke="#222" stroke-width="1.6"/>
<circle cx="1672" cy="147.5" r="7" fill="#ffffff" stroke="#222" stroke-width="1.4"/>
<circle cx="1672" cy="147.5" r="4.8" fill="#222"/>
<!-- arrow -->
<path d="M1659.5,174.5 L1685,182.5 L1677.5,186 L1684.5,194 L1681,197.5 L1673.5,190 L1667.5,198 Z" fill="#ffffff" stroke="#222" stroke-width="1.5" stroke-linejoin="miter"/>
<path d="M1691,197 L1691,204.5 L1683,204.5 Z" fill="#222"/>
<!-- stopwatch -->
<circle cx="1672" cy="225" r="10" fill="none" stroke="#333" stroke-width="1.6"/>
<circle cx="1672" cy="225" r="7.5" fill="none" stroke="#555" stroke-width="1"/>
<rect x="1669" y="210.5" width="6" height="2.5" fill="#444"/>
<rect x="1671" y="212.5" width="2" height="2.5" fill="#444"/>
<path d="M1659,236 L1685.5,210.5" stroke="#333" stroke-width="1.8"/>
<path d="M1691,234 L1691,241.5 L1683,241.5 Z" fill="#222"/>
<!-- highlighter -->
<path d="M1657.3,248.6 L1669,248.6 L1685.7,265.3 L1674.9,275.7 L1657.3,260 Z" fill="#ffffff" stroke="#2a2a2a" stroke-width="1.5" stroke-linejoin="round"/>
<path d="M1658,256 L1658,260 L1673,273 L1664.8,258.5 Z" fill="#dcdcdc"/>
<path d="M1657.3,248.6 L1664.5,248.6 L1657.3,255.5 Z" fill="#222"/>
<path d="M1658,259.5 L1664.5,259.5 L1664.5,256.5 L1669,255.5 L1669,249" fill="none" stroke="#2a2a2a" stroke-width="1.3" stroke-linejoin="round"/>
<path d="M1658,255.5 L1664,250" fill="none" stroke="#2a2a2a" stroke-width="1"/>
<path d="M1669,255 L1679,265 M1664.8,258.5 L1673.5,268.5" stroke="#2a2a2a" stroke-width="1.3"/>
<path d="M1672,271.5 L1681.5,262.5 M1673.5,273 L1683,264" stroke="#2a2a2a" stroke-width="1.1"/>
<path d="M1691,271 L1691,279 L1683,279 Z" fill="#222"/>
<!-- line -->
<path d="M1660.5,285.5 L1684.5,309 L1683,310.5 L1659,287 Z" fill="#eee" stroke="#333" stroke-width="1.4" stroke-linejoin="round"/>
<circle cx="1686" cy="287.5" r="5" fill="#ff0a7f"/>
<path d="M1691,309 L1691,316.5 L1683,316.5 Z" fill="#222"/>
<!-- eraser -->
<path d="M1673,324.5 L1687,338.5 L1675,349.5 L1660.5,335.5 Z" fill="#e6e6e6" stroke="#2a2a2a" stroke-width="1.5" stroke-linejoin="round"/>
<path d="M1661.5,336 L1664.5,332.5 L1679,346 L1675,349 Z" fill="#d4d4d4"/>
<path d="M1664.5,332.5 L1679,346" stroke="#2a2a2a" stroke-width="1.3"/>
<path d="M1666.7,320.5 L1671.8,325.5 L1661,336 L1656.2,330.5 Z" fill="#f2f2f2" stroke="#2a2a2a" stroke-width="1.5" stroke-linejoin="round"/>
<path d="M1660.5,327 L1665,331.5" stroke="#2a2a2a" stroke-width="1.3"/>
<path d="M1675,349.5 L1687,338.5 L1688.5,340.5 L1676.5,351.5 Z" fill="#fff" stroke="#2a2a2a" stroke-width="1.3" stroke-linejoin="round"/>
<!-- dot -->
<circle cx="1672" cy="374" r="3.2" fill="#222"/>
<!-- undo -->
<path d="M1658,407.5 L1668.5,399.5 L1668.5,404.5 L1676,404.5 Q1686,406 1686,414 Q1685,423 1675,423 L1674,423 L1674,418 L1675,418 Q1680,417.5 1680,413.5 Q1680,410 1675,410 L1668.5,410 L1668.5,415.5 Z" fill="#ffffff" stroke="#333" stroke-width="1.5" stroke-linejoin="round"/>
<!-- trash -->
<rect x="1668.5" y="435.5" width="7" height="2.5" fill="#fff" stroke="#333" stroke-width="1.2"/>
<rect x="1661" y="438" width="22" height="5" rx="1.5" fill="#f0f0f0" stroke="#333" stroke-width="1.5"/>
<path d="M1662.5,443 L1662.5,458 Q1662.5,460 1664.5,460 L1679.5,460 Q1681.5,460 1681.5,458 L1681.5,443" fill="#eee" stroke="#333" stroke-width="1.5"/>
<path d="M1667.5,444 L1667.5,458 M1676.5,444 L1676.5,458" stroke="#444" stroke-width="1.2"/>
<!-- easel -->
<rect x="1667.5" y="472.5" width="8" height="2.5" fill="#fff" stroke="#333" stroke-width="1.2"/>
<rect x="1660" y="475" width="22" height="17.5" rx="2" fill="#fff" stroke="#333" stroke-width="1.6"/>
<rect x="1662.5" y="478" width="17" height="10" fill="#d8d8d8" stroke="#333" stroke-width="1.2"/>
<path d="M1666,492.5 L1665,499.5 M1676.5,492.5 L1677.5,499.5" stroke="#333" stroke-width="2"/>
<circle cx="1686" cy="475" r="5" fill="#ff0a7f"/>
<path d="M1691,496.5 L1691,504.5 L1683,504.5 Z" fill="#222"/>
<!-- camera -->
<rect x="1666.5" y="514.5" width="9.5" height="3" fill="#fff" stroke="#333" stroke-width="1.2"/>
<rect x="1659" y="517" width="26.5" height="19" rx="2" fill="#fff" stroke="#333" stroke-width="1.6"/>
<circle cx="1669" cy="526" r="6.3" fill="#fff" stroke="#333" stroke-width="1.5"/>
<circle cx="1669" cy="526" r="4.5" fill="#333"/>
<circle cx="1667.5" cy="524.5" r="1.3" fill="#ddd"/>
<circle cx="1680.5" cy="523" r="1.8" fill="#fff" stroke="#333" stroke-width="1.1"/>
<!-- clipboard -->
<rect x="1661" y="549.5" width="22" height="24" rx="2.5" fill="#fff" stroke="#333" stroke-width="1.6"/>
<path d="M1665.5,552 L1665.5,550 L1670,550 Q1672,545.5 1674,550 L1678.5,550 L1678.5,552 Z" fill="#eee" stroke="#333" stroke-width="1.3" stroke-linejoin="round"/>
<path d="M1665.5,556.5 L1679.5,556.5 M1665.5,561.5 L1679.5,561.5 M1665.5,566.5 L1679.5,566.5" stroke="#333" stroke-width="1.3"/>
<!-- colors -->
<g shape-rendering="crispEdges">
<rect x="1653.5" y="580" width="18.5" height="18.5" fill="#00aeef"/>
<rect x="1672" y="580" width="19" height="18.5" fill="#ffed00"/>
<rect x="1653.5" y="598.5" width="18.5" height="18.5" fill="#ec008c"/>
<rect x="1672" y="598.5" width="19" height="18.5" fill="#000000"/>
<rect x="1653.5" y="617" width="37.5" height="38" fill="#ffed00"/>
</g>
</g>

</svg>
</body></html>
